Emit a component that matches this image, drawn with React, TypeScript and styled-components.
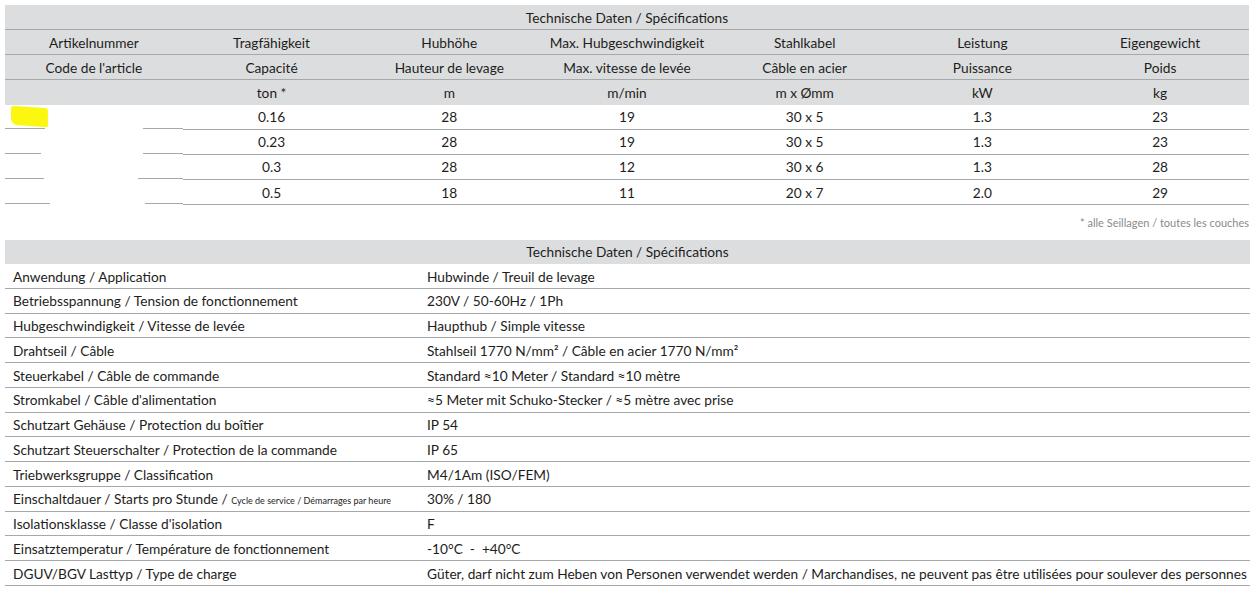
import styled, { createGlobalStyle } from 'styled-components'
import type { ReactNode } from 'react'

const GlobalStyle = createGlobalStyle`
  body {
    margin: 0;
    background: #ffffff;
    font-family: Lato, 'Open Sans', sans-serif;
    color: #1d1d1b;
  }
`

const Small = styled.span`
  font-size: 9px;
`

const specColumns = [
  { de: 'Artikelnummer', fr: "Code de l'article", unit: '' },
  { de: 'Tragfähigkeit', fr: 'Capacité', unit: 'ton *' },
  { de: 'Hubhöhe', fr: 'Hauteur de levage', unit: 'm' },
  { de: 'Max. Hubgeschwindigkeit', fr: 'Max. vitesse de levée', unit: 'm/min' },
  { de: 'Stahlkabel', fr: 'Câble en acier', unit: 'm x Ømm' },
  { de: 'Leistung', fr: 'Puissance', unit: 'kW' },
  { de: 'Eigengewicht', fr: 'Poids', unit: 'kg' },
]

// first cell is blanked out in the source, the line under it is broken
const models = [
  { gap: [40, 138], values: ['0.16', '28', '19', '30 x 5', '1.3', '23'] },
  { gap: [36, 138], values: ['0.23', '28', '19', '30 x 5', '1.3', '23'] },
  { gap: [39, 133], values: ['0.3', '28', '12', '30 x 6', '1.3', '28'] },
  { gap: [45, 140], values: ['0.5', '18', '11', '20 x 7', '2.0', '29'] },
]

const details: [ReactNode, string][] = [
  ['Anwendung / Application', 'Hubwinde / Treuil de levage'],
  ['Betriebsspannung / Tension de fonctionnement', '230V / 50-60Hz / 1Ph'],
  ['Hubgeschwindigkeit / Vitesse de levée', 'Haupthub / Simple vitesse'],
  ['Drahtseil / Câble', 'Stahlseil 1770 N/mm² / Câble en acier 1770 N/mm²'],
  ['Steuerkabel / Câble de commande', 'Standard ≈10 Meter / Standard ≈10 mètre'],
  ["Stromkabel / Câble d'alimentation", '≈5 Meter mit Schuko-Stecker / ≈5 mètre avec prise'],
  ['Schutzart Gehäuse / Protection du boîtier', 'IP 54'],
  ['Schutzart Steuerschalter / Protection de la commande', 'IP 65'],
  ['Triebwerksgruppe / Classification', 'M4/1Am (ISO/FEM)'],
  [
    <>
      Einschaltdauer / Starts pro Stunde / <Small>Cycle de service / Démarrages par heure</Small>
    </>,
    '30% / 180',
  ],
  ["Isolationsklasse / Classe d'isolation", 'F'],
  ['Einsatztemperatur / Température de fonctionnement', '-10°C  -  +40°C'],
  ['DGUV/BGV Lasttyp / Type de charge', 'Güter, darf nicht zum Heben von Personen verwendet werden / Marchandises, ne peuvent pas être utilisées pour soulever des personnes'],
]

const App = () => {
  return (
    <>
      <GlobalStyle />
      <Page>
        <SpecTable>
          <tbody>
            <HeadRow>
              <HeadCell colSpan={7}>Technische Daten / Spécifications</HeadCell>
            </HeadRow>
            <HeadRow>
              {specColumns.map((c) => (
                <HeadCell key={c.de}>{c.de}</HeadCell>
              ))}
            </HeadRow>
            <HeadRow>
              {specColumns.map((c) => (
                <HeadCell key={c.fr}>{c.fr}</HeadCell>
              ))}
            </HeadRow>
            <HeadRow $last>
              {specColumns.map((c) => (
                <HeadCell key={c.de}>{c.unit}</HeadCell>
              ))}
            </HeadRow>
            {models.map((m, i) => (
              <tr key={i}>
                <BlankCell $from={m.gap[0]} $to={m.gap[1]}>
                  {i === 0 && <Marker />}
                </BlankCell>
                {m.values.map((v, j) => (
                  <DataCell key={j}>{v}</DataCell>
                ))}
              </tr>
            ))}
          </tbody>
        </SpecTable>

        <Footnote>* alle Seillagen / toutes les couches</Footnote>

        <DetailTable>
          <DetailTitle>Technische Daten / Spécifications</DetailTitle>
          {details.map(([label, value], i) => (
            <DetailRow key={i}>
              <Label>{label}</Label>
              <Value>{value}</Value>
            </DetailRow>
          ))}
        </DetailTable>
      </Page>
    </>
  )
}

const Page = styled.div`
  padding: 5px 6px 0 5px;
  display: flex;
  flex-direction: column;
`

const SpecTable = styled.table`
  width: 1244px;
  table-layout: fixed;
  border-collapse: collapse;
  font-size: 13.7px;
`

const HeadRow = styled.tr<{ $last?: boolean }>`
  background: #dcdddf;

  td {
    height: 24.15px;
    border-bottom: ${(p) => (p.$last ? 'none' : '1.5px solid #a7a8aa')};
  }
`

const HeadCell = styled.td`
  padding: 0;
  text-align: center;
  vertical-align: middle;
  white-space: nowrap;
`

const DataCell = styled.td`
  height: 24.15px;
  padding: 0;
  text-align: center;
  vertical-align: middle;
  border-bottom: 1.5px solid #a7a8aa;
`

const BlankCell = styled.td<{ $from: number; $to: number }>`
  position: relative;
  height: 24.15px;
  padding: 0;
  border-bottom: 1.5px solid transparent;
  background-image: linear-gradient(
    to right,
    #a7a8aa ${(p) => p.$from}px,
    #ffffff ${(p) => p.$from}px,
    #ffffff ${(p) => p.$to}px,
    #a7a8aa ${(p) => p.$to}px
  );
  background-size: 100% 1.5px;
  background-position: 0 100%;
  background-repeat: no-repeat;
  background-origin: border-box;
  background-clip: border-box;
`

const Marker = styled.span`
  position: absolute;
  left: 6px;
  top: 2px;
  width: 37px;
  height: 19px;
  background: #fbf711;
  border-radius: 3px 2px 2px 6px;
  transform: skewY(4deg);
  filter: blur(0.4px);
`

const Footnote = styled.div`
  align-self: flex-end;
  margin: 8px 1px 0 0;
  height: 20px;
  line-height: 20px;
  font-size: 11px;
  color: #8a8a8a;
`

const DetailTable = styled.div`
  margin-top: 7px;
  width: 1245px;
  display: flex;
  flex-direction: column;
  font-size: 13.7px;
`

const DetailTitle = styled.div`
  height: 24px;
  line-height: 24px;
  background: #dcdddf;
  text-align: center;
`

const DetailRow = styled.div`
  display: grid;
  grid-template-columns: 415px 1fr;
  height: 24.75px;
  align-items: center;
  border-bottom: 1.5px solid #a7a8aa;
  box-sizing: border-box;
`

const Label = styled.div`
  padding-left: 8px;
  white-space: nowrap;
`

const Value = styled.div`
  padding-left: 7px;
  white-space: pre;
`

export default App
